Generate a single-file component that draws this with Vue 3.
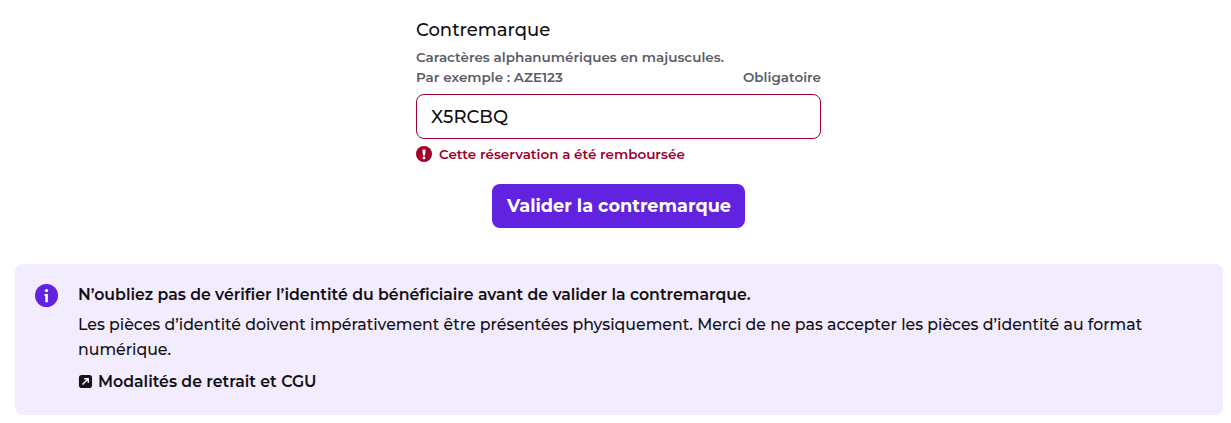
<template>
  <div class="page">
    <div class="field">
      <label class="title" for="cm">Contremarque</label>
      <p class="hint">Caractères alphanumériques en majuscules.</p>
      <div class="hint-row">
        <span>Par exemple : AZE123</span>
        <span>Obligatoire</span>
      </div>
      <input id="cm" class="input" value="X5RCBQ" />
      <div class="error">
        <svg class="err-icon" viewBox="0 0 16 16"><circle cx="8" cy="8" r="8" fill="#a0002c" /><path d="M6.3 3.4h3.4L9 9.6H7z" fill="#fff" /><circle cx="8" cy="12" r="1.4" fill="#fff" /></svg>
        <span>Cette réservation a été remboursée</span>
      </div>
    </div>
    <div class="actions"><button class="btn">Valider la contremarque</button></div>
    <div class="callout">
      <svg class="info" viewBox="0 0 24 24"><circle cx="12" cy="12" r="12" fill="#6123df" /><circle cx="12" cy="6.8" r="1.7" fill="#fff" /><path d="M9.8 10.4h3.6v8.6h-2.6v-6.8h-1z" fill="#fff" /></svg>
      <div class="body">
        <p class="strong">N’oubliez pas de vérifier l’identité du bénéficiaire avant de valider la contremarque.</p>
        <p class="text">Les pièces d’identité doivent impérativement être présentées physiquement. Merci de ne pas accepter les pièces d’identité au format numérique.</p>
        <a class="link">
          <svg class="ext" viewBox="0 0 16 16"><rect x="1" y="1" width="14" height="14" rx="3" fill="#161617" /><path d="M4.8 11.2l5.6-5.6M6.6 5h4.4v4.4" stroke="#fff" stroke-width="1.5" fill="none" /></svg>
          <span>Modalités de retrait et CGU</span>
        </a>
      </div>
    </div>
  </div>
</template>

<script setup>
</script>

<style>
body { margin: 0; background: #fff; }
</style>

<style scoped>
.page { width: 1231px; height: 423px; box-sizing: border-box; padding: 19px 8px 0 15px; font-family: Montserrat, "Open Sans", "Liberation Sans", sans-serif; color: #101012; overflow: hidden; }
.field { width: 405px; margin-left: 401px; display: flex; flex-direction: column; }
.title { font-size: 18px; line-height: 22px; margin-bottom: 6px; font-weight: 500; }
.hint { margin: 0; font-size: 13.5px; line-height: 20px; color: #5c5c66; font-weight: 600; }
.hint-row { display: flex; justify-content: space-between; font-size: 13.5px; line-height: 20px; color: #5c5c66; font-weight: 600; }
.input { box-sizing: border-box; height: 45px; margin-top: 7px; border: 1px solid #a0002c; border-radius: 8px; padding: 0 14px; font: 500 18px Montserrat, sans-serif; color: #101012; outline: none; }
.error { display: flex; align-items: center; gap: 7px; margin-top: 6px; color: #a0002c; font-size: 13.5px; line-height: 18px; font-weight: 600; }
.err-icon { width: 16px; height: 16px; }
.actions { display: flex; justify-content: center; margin: 21px 2px 36px 0; }
.btn { width: 253px; height: 44px; border: 0; border-radius: 8px; background: #6123df; color: #fff; font: 700 17.7px Montserrat, sans-serif; padding: 0 0 2px 2px; }
.callout { display: flex; gap: 20px; width: 1208px; height: 151px; box-sizing: border-box; padding: 18px 20px; background: #f3ebfe; border-radius: 8px; }
.info { width: 23px; height: 23px; flex: none; margin-top: 2px; }
.body { flex: 1; font-size: 15.75px; line-height: 25px; }
.strong { margin: 0; font-weight: 600; }
.text { margin: 5px 0 0; font-weight: 500; }
.link { display: flex; align-items: center; gap: 5px; margin-top: 7px; font-weight: 600; }
.ext { width: 15px; height: 15px; }
</style>
